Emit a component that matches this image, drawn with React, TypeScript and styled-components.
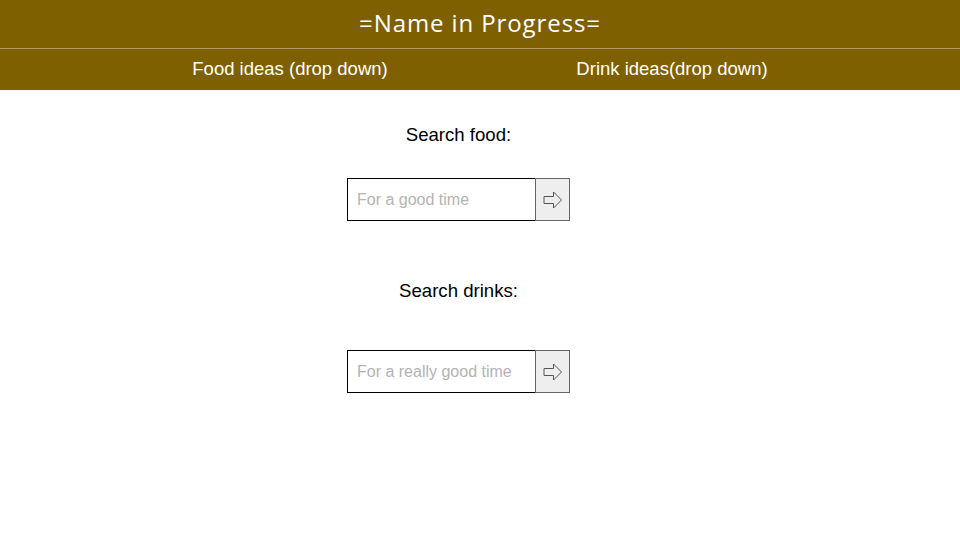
import styled, { createGlobalStyle } from 'styled-components';

const GlobalStyle = createGlobalStyle`
  html, body {
    margin: 0;
    padding: 0;
    background: #ffffff;
    font-family: 'Liberation Sans', Arial, sans-serif;
  }
`;

type SearchBlockProps = {
  label: string;
  placeholder: string;
  spacing: number;
};

const ArrowIcon = () => (
  <svg width="20" height="18" viewBox="0 0 20 18">
    <polygon
      points="1,5.5 10.5,5.5 10.5,1 18.5,9 10.5,17 10.5,12.5 1,12.5"
      fill="none"
      stroke="#555"
      strokeWidth="1"
    />
  </svg>
);

const SearchBlock: React.FC<SearchBlockProps> = ({ label, placeholder, spacing }) => {
  return (
    <Block $spacing={spacing}>
      <Label>{label}</Label>
      <SearchRow>
        <SearchInput placeholder={placeholder} />
        <GoButton>
          <ArrowIcon />
        </GoButton>
      </SearchRow>
    </Block>
  );
};

export default function App() {
  return (
    <>
      <GlobalStyle />
      <Header>
        <Title>=Name in Progress=</Title>
      </Header>
      <Nav>
        <NavItem>Food ideas (drop down)</NavItem>
        <NavItem>Drink ideas(drop down)</NavItem>
      </Nav>
      <Main>
        <SearchBlock label="Search food:" placeholder="For a good time" spacing={33} />
        <SearchBlock label="Search drinks:" placeholder="For a really good time" spacing={49} />
      </Main>
    </>
  );
}

const Header = styled.header`
  box-sizing: border-box;
  height: 49px;
  padding-bottom: 4px;
  background: #7f6000;
  border-bottom: 1px solid #b09a62;
  display: flex;
  align-items: center;
  justify-content: center;
`;

const Title = styled.h1`
  margin: 0;
  font-family: 'Open Sans', 'DejaVu Sans', sans-serif;
  font-weight: 400;
  font-size: 24px;
  letter-spacing: 0.9px;
  color: #ffffff;
`;

const Nav = styled.nav`
  box-sizing: border-box;
  height: 41px;
  padding: 0 97px 2px 99px;
  background: #7f6000;
  display: grid;
  grid-template-columns: 1fr 1fr;
  align-items: center;
`;

const NavItem = styled.div`
  text-align: center;
  color: #ffffff;
  font-size: 18.5px;
`;

const Main = styled.main`
  display: flex;
  flex-direction: column;
  align-items: center;
  gap: 60px;
  padding: 35px 43px 0 0;
`;

const Block = styled.section<{ $spacing: number }>`
  display: flex;
  flex-direction: column;
  align-items: center;
  gap: ${(p) => p.$spacing}px;
`;

const Label = styled.p`
  margin: 0;
  font-size: 18.6px;
  line-height: 20px;
  color: #000000;
`;

const SearchRow = styled.div`
  display: flex;
`;

const SearchInput = styled.input`
  box-sizing: border-box;
  width: 189px;
  height: 43px;
  border: 1px solid #000000;
  padding: 0 9px;
  font-family: 'Liberation Sans', Arial, sans-serif;
  font-size: 16px;
  outline: none;

  &::placeholder {
    color: #b3b3b3;
  }
`;

const GoButton = styled.button`
  box-sizing: border-box;
  width: 35px;
  height: 43px;
  margin-left: -1px;
  border: 1px solid #666666;
  background: #eeeeee;
  padding: 0;
  display: flex;
  align-items: center;
  justify-content: center;
`;
